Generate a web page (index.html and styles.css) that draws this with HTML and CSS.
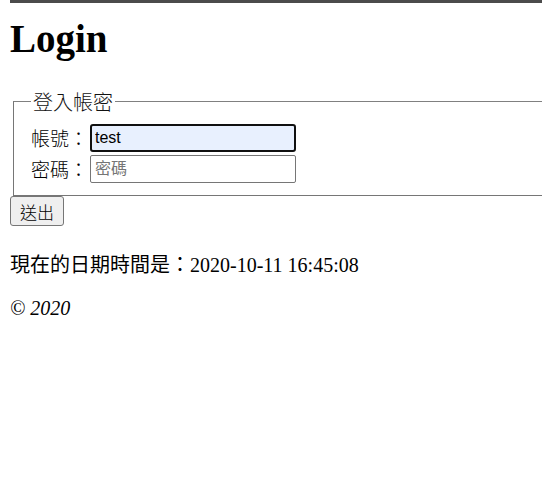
FILE: index.html
```html
<!DOCTYPE html>
<html lang="zh-Hant">
<head>
    <meta charset="UTF-8">
    <meta name="viewport" content="width=device-width, initial-scale=1.0">
    <title>Login</title>
    <link rel="stylesheet" href="styles.css">
</head>
<body>
    <div class="topbar"></div>
    <h1>Login</h1>
    <form class="login-form">
        <fieldset class="box">
            <legend>登入帳密</legend>
            <div class="row">
                <label for="account">帳號：</label>
                <input class="field focused" id="account" type="text" value="test">
            </div>
            <div class="row">
                <label for="password">密碼：</label>
                <input class="field" id="password" type="password" placeholder="密碼">
            </div>
        </fieldset>
        <button class="submit" type="button">送出</button>
    </form>
    <p class="now">現在的日期時間是：2020-10-11 16:45:08</p>
    <address class="copy">&copy; 2020</address>
</body>
</html>
```

FILE: styles.css
```css
body {
    margin: 0 10px;
    font-family: "Liberation Serif", "Noto Sans CJK TC", serif;
    font-size: 20px;
    color: #000;
    background-color: #fff;
}
.topbar {
    height: 3px;
    margin: 0 -10px;
    background-color: #4b4b4b; /* window edge */
}
h1 {
    font-size: 39px;
    margin: 14px 0 0;
    line-height: 44px;
}
.login-form {
    margin-top: 26px;
}
.box {
    margin: 0 -10px 0 3px;
    padding: 6px 12px 11px 17px;
    border: 1px solid #767676;
    border-top-color: #808080;
    border-right: none;
}
.box legend {
    padding: 0 2px;
    font-family: "Noto Sans CJK TC", sans-serif;
    font-size: 20px;
    font-weight: 300;
    color: #111;
}
.row {
    display: flex;
    align-items: center;
    height: 31px;
}
.row label {
    width: 59px;
    font-family: "Noto Sans CJK TC", sans-serif;
    font-size: 19px;
    font-weight: 300;
}
.field {
    width: 206px;
    height: 28px;
    box-sizing: border-box;
    margin: 0;
    padding: 1px 4px;
    border: 1px solid #767676;
    border-radius: 2px;
    font-family: "Liberation Sans", "Noto Sans CJK TC", sans-serif;
    font-size: 16px;
}
.field::placeholder {
    color: #757575;
}
.focused {
    background-color: #e8f0fe;
    border: 2px solid #101010;
    border-radius: 3px;
    padding: 0 3px;
}
.submit {
    display: block;
    margin: 0;
    padding: 2px 9px;
    height: 30px;
    border: 1px solid #767676;
    border-radius: 3px;
    background-color: #efefef;
    font-family: "Noto Sans CJK TC", sans-serif;
    font-size: 17px;
    font-weight: 300;
    color: #000;
}
.now {
    margin: 27px 0 0;
    line-height: 24px;
}
.copy {
    margin-top: 19px;
    line-height: 24px;
}
```
